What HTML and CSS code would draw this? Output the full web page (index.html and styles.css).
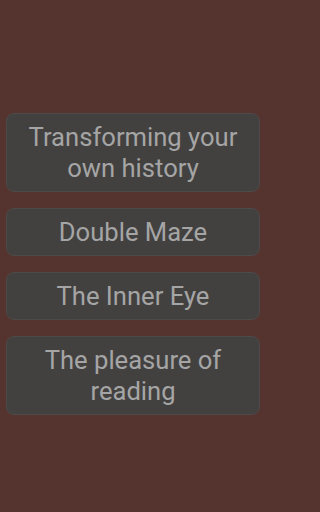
FILE: index.html
```html
<!DOCTYPE html>
<html>
<head>
<meta charset="utf-8">
<link rel="stylesheet" href="styles.css">
</head>
<body>
<div class="list">
  <div class="item">Transforming your own history</div>
  <div class="item">Double Maze</div>
  <div class="item">The Inner Eye</div>
  <div class="item">The pleasure of reading</div>
</div>
</body>
</html>
```
FILE: styles.css
```css
html, body {
  margin: 0;
  padding: 0;
  background: #553430;
  width: 266px;
  height: 512px;
  overflow: hidden;
}
.list {
  display: flex;
  flex-direction: column;
  gap: 16px;
  padding: 113px 6px 0 6px;
}
.item {
  background: #424140;
  border: 1px solid #4d4a48;
  border-radius: 8px;
  color: #a5a5a5;
  font-family: Roboto, "Noto Sans", sans-serif;
  font-size: 25.6px;
  line-height: 31px;
  text-align: center;
  padding: 8px 12px 7px;
}
```
